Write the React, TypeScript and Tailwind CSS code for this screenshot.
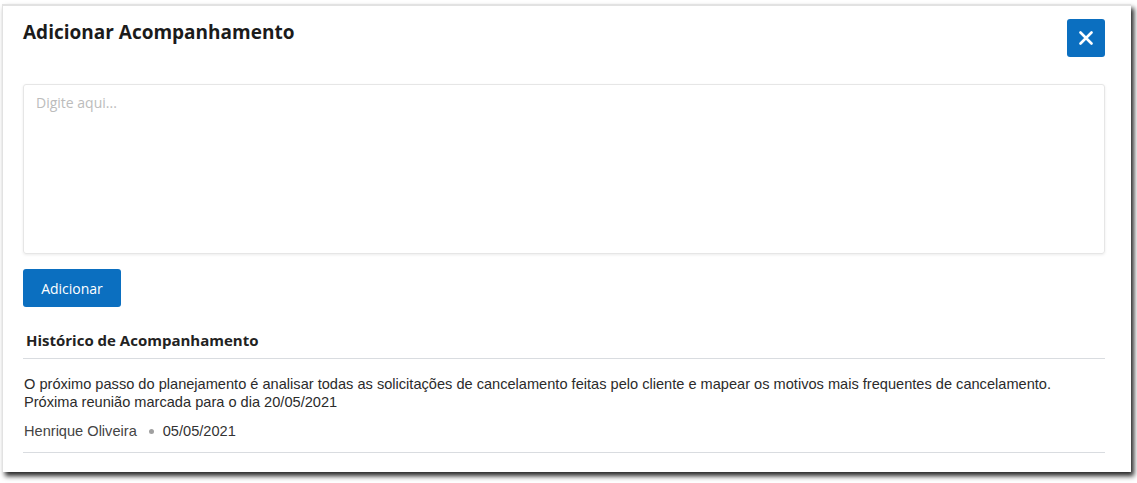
import React, { useState } from "react";

const entries = [
  {
    text: "O próximo passo do planejamento é analisar todas as solicitações de cancelamento feitas pelo cliente e mapear os motivos mais frequentes de cancelamento.\nPróxima reunião marcada para o dia 20/05/2021",
    author: "Henrique Oliveira",
    date: "05/05/2021",
  },
];

const CloseIcon = () => (
  <svg width="14" height="14" viewBox="0 0 14 14" fill="none">
    <path d="M1.5 1.5L12.5 12.5M12.5 1.5L1.5 12.5" stroke="white" strokeWidth="2.6" strokeLinecap="round" />
  </svg>
);

const App = () => {
  const [note, setNote] = useState("");

  return (
    <div className="w-[1137px] h-[483px] bg-white overflow-hidden">
      <div className="ml-[2px] mt-[4px] w-[1129px] h-[468px] bg-white border-l-[1.5px] border-t-[2px] border-[#e2e2e2] shadow-[3px_4px_5px_rgba(0,0,0,0.85)] pl-[20px] pr-[26px] pt-[13px]">
        <div className="flex items-start justify-between">
          <h2
            className="pt-[1px] text-[19px] leading-[24px] font-bold text-[#1b1b1b]"
            style={{ fontFamily: '"Open Sans", "Noto Sans", sans-serif' }}
          >
            Adicionar Acompanhamento
          </h2>
          <button className="w-[38px] h-[38px] rounded-[3px] bg-[#0b6fc0] flex items-center justify-center">
            <CloseIcon />
          </button>
        </div>

        <textarea
          value={note}
          onChange={(e) => setNote(e.target.value)}
          placeholder="Digite aqui..."
          className="mt-[27px] block w-full h-[170px] resize-none rounded-[3px] border border-[#e6e6e6] shadow-[0_1px_3px_rgba(0,0,0,0.08)] px-[12px] py-[7px] text-[14px] text-[#333] placeholder:text-[#bcbcbc] outline-none"
          style={{ fontFamily: '"Open Sans", "Noto Sans", sans-serif' }}
        />

        <button
          className="mt-[15px] w-[98px] h-[38px] rounded-[3px] bg-[#0b6fc0] text-white text-[14px]"
          style={{ fontFamily: '"Open Sans", "Noto Sans", sans-serif' }}
        >
          Adicionar
        </button>

        <div className="mt-[23px]">
          <h3
            className="pl-[3px] pb-[8px] text-[15px] leading-[20px] font-bold text-[#222] border-b border-[#d9dce0]"
            style={{ fontFamily: '"Open Sans", "Noto Sans", sans-serif' }}
          >
            Histórico de Acompanhamento
          </h3>

          {entries.map((entry, i) => (
            <div
              key={i}
              className="pl-[1px] pt-[16px] pb-[12px] border-b border-[#d9dce0]"
              style={{ fontFamily: '"Liberation Sans", Arial, sans-serif' }}
            >
              <div className="text-[14.6px] leading-[18px] text-[#2b2b2b]">
                {entry.text.split("\n").map((line, j) => (
                  <p key={j}>{line}</p>
                ))}
              </div>
              <div className="mt-[11px] flex items-center text-[14.6px] leading-[18px] text-[#444]">
                <span>{entry.author}</span>
                <span className="ml-[12px] mr-[9px] w-[5px] h-[5px] rounded-full bg-[#a0a0a0]" />
                <span className="text-[#333]">{entry.date}</span>
              </div>
            </div>
          ))}
        </div>
      </div>
    </div>
  );
};

export default App;
